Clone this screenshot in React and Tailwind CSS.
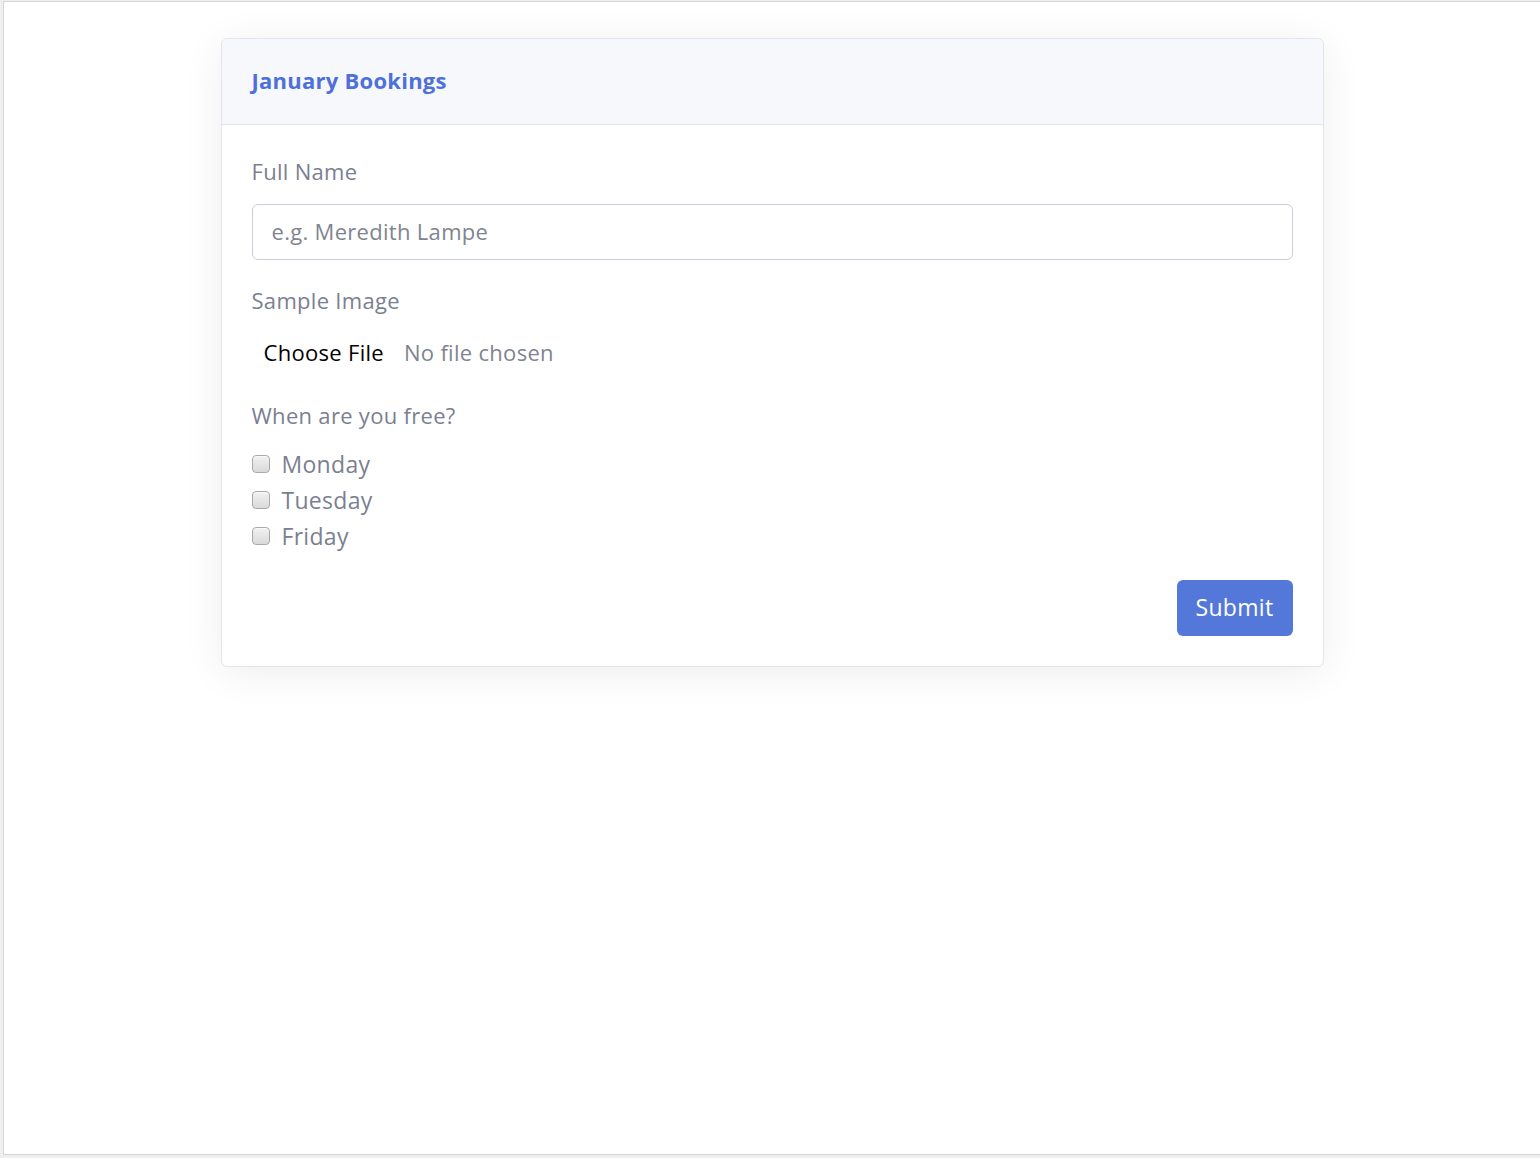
export default function App() {
  const font = { fontFamily: "'Open Sans', 'Noto Sans', sans-serif" };
  const days = ["Monday", "Tuesday", "Friday"];
  return (
    <div className="w-full h-[1158px] bg-[#efefef] pl-[3px] pt-[1px] pb-[3px] tracking-[0.3px]" style={font}>
      <div className="h-full border border-r-0 border-[#d6d6d6] bg-white pt-[36px]">
        <div className="mx-auto w-[1103px] rounded-[6px] border border-[#e3e5ee] bg-white shadow-[0_6px_40px_rgba(0,0,0,0.07)]">
          <div className="h-[86px] px-[30px] pb-[3px] flex items-center bg-[#f7f8fc] border-b border-[#e3e5ee] rounded-t-[6px]">
            <h1 className="text-[22px] leading-[30px] font-bold tracking-[0.25px] text-[#4d70da]">January Bookings</h1>
          </div>
          <div className="p-[30px] flex flex-col">
            <label className="h-[36px] leading-[33px] text-[22px] text-[#7b7f90]">Full Name</label>
            <div className="mt-[13px] h-[56px] rounded-[6px] border border-[#cbcdd8] flex items-center px-[19px] pb-[2px]">
              <span className="text-[22px] text-[#80848f]">e.g. Meredith Lampe</span>
            </div>
            <label className="mt-[24px] h-[36px] leading-[33px] text-[22px] text-[#7b7f90]">Sample Image</label>
            <div className="mt-[15px] h-[36px] pb-[2px] flex items-center">
              <span className="pl-[12px] text-[22px] text-black">Choose File</span>
              <span className="ml-[20px] text-[22px] text-[#80848f]">No file chosen</span>
            </div>
            <label className="mt-[28px] h-[36px] leading-[33px] text-[22px] text-[#7b7f90]">When are you free?</label>
            <div className="mt-[11px] flex flex-col">
              {days.map((d) => (
                <div key={d} className="h-[36px] flex items-center">
                  <span className="w-[18px] h-[18px] rounded-[4px] border border-[#a9a9a9] bg-gradient-to-b from-[#f2f2f2] to-[#d9d9d9] shadow-[inset_0_1px_0_rgba(255,255,255,0.6)]" />
                  <span className="ml-[12px] text-[23px] leading-[34px] text-[#7b7f90]">{d}</span>
                </div>
              ))}
            </div>
            <div className="mt-[26px] flex justify-end">
              <button className="h-[56px] w-[116px] rounded-[6px] bg-[#5478d9] text-white text-[23px] pb-[2px]">Submit</button>
            </div>
          </div>
        </div>
      </div>
    </div>
  );
}
